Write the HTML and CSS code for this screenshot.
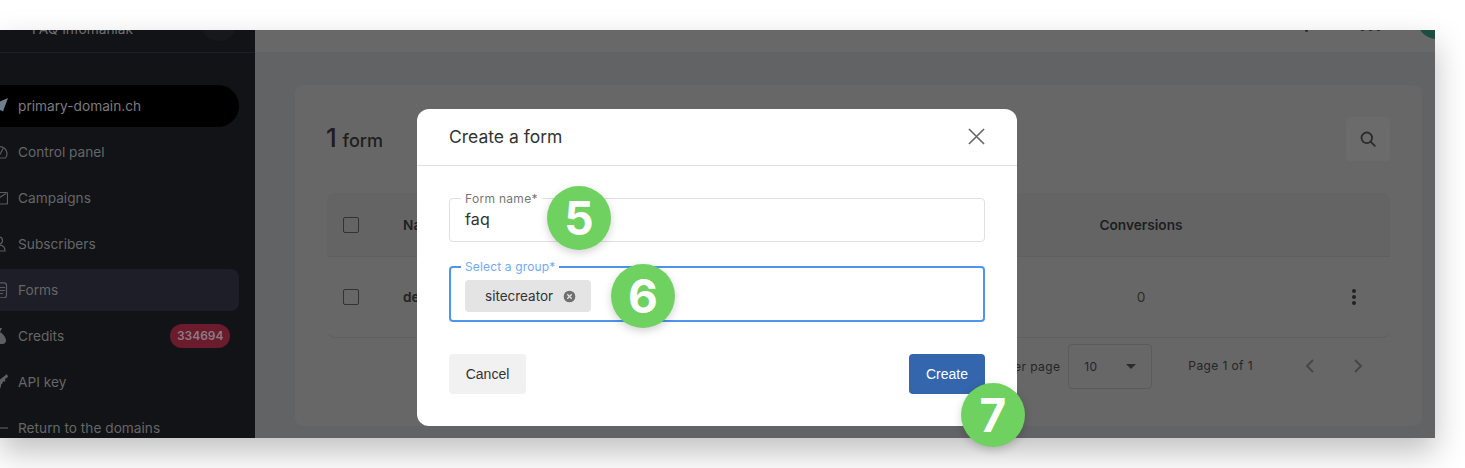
FILE: index.html
```html
<!DOCTYPE html>
<html lang="en">
<head>
  <meta charset="UTF-8" />
  <title>Create a form</title>
  <link rel="stylesheet" href="styles.css">
</head>
<body>
  <div class="shot">
    <aside class="sidebar">
      <div class="side-top">
        <span class="side-org">FAQ Infomaniak</span>
        <span class="side-avatar"></span>
      </div>
      <nav class="side-nav">
        <a class="nav-item nav-domain">
          <svg class="nav-icon" viewBox="0 0 16 16"><path class="solid-blue" d="M16 0 0 7l4 2.500L5.500 16l3-4 2.500 1.500z"/></svg>
          <span>primary-domain.ch</span>
        </a>
        <a class="nav-item">
          <svg class="nav-icon" viewBox="0 0 16 16"><path d="M2.500 14a7 7 0 1 1 11 0zM8 10.500 11 4.500"/></svg>
          <span>Control panel</span>
        </a>
        <a class="nav-item">
          <svg class="nav-icon" viewBox="0 0 16 16"><rect x="0" y="2.500" width="15.500" height="11.500" rx="1"/><path d="m2 11 5.500-3.500L14 3.500"/></svg>
          <span>Campaigns</span>
        </a>
        <a class="nav-item">
          <svg class="nav-icon" viewBox="0 0 16 16"><circle cx="7" cy="4.500" r="3.500"/><path d="M1 15c0-4 2-6 6-6s6 2 6 6z"/></svg>
          <span>Subscribers</span>
        </a>
        <a class="nav-item nav-active">
          <svg class="nav-icon" viewBox="0 0 16 16"><rect x="0" y="0.800" width="14.500" height="15" rx="2.500"/><path d="M5 5.500h8M5 8.500h8M5 11.500h6"/></svg>
          <span>Forms</span>
        </a>
        <a class="nav-item">
          <svg class="nav-icon" viewBox="0 0 16 16"><path class="solid" d="M3 0h7L8.500 3.500h-3zM5 4.500h4c3 2.500 5 5.500 5 8 0 2-1.500 3.500-3.500 3.500h-7C1.500 16 0 14.500 0 12.500c0-2.500 2-5.500 5-8z"/></svg>
          <span>Credits</span>
          <b class="nav-badge">334694</b>
        </a>
        <a class="nav-item">
          <svg class="nav-icon" viewBox="0 0 16 16"><path class="solid" d="M15 0 16 3 13 5 13.500 7.500 11 7.500 10 10 9 10.500C9.500 13 8 16 4.500 16 1.500 16 0 14 0 11.500 0 8.500 3 6.500 6 7z"/></svg>
          <span>API key</span>
        </a>
        <a class="nav-item">
          <svg class="nav-icon" viewBox="0 0 16 16"><path d="M0 8h16"/></svg>
          <span>Return to the domains</span>
        </a>
      </nav>
    </aside>

    <main class="main">
      <div class="topbar">
        <span class="top-help"></span>
        <span class="top-grid"><i></i><i></i><i></i></span>
        <span class="top-avatar"></span>
      </div>
      <div class="content">
        <section class="card">
          <header class="card-head">
            <h2 class="card-title"><strong>1</strong> form</h2>
            <button class="search-btn">
              <svg viewBox="0 0 16 16" width="16" height="16"><circle cx="6.800" cy="6.800" r="5.300"/><path d="m10.800 10.800 4 4"/></svg>
            </button>
          </header>
          <div class="table">
            <div class="tr th">
              <span class="checkbox"></span>
              <span>Name</span>
              <span class="num">Conversions</span>
              <span></span>
            </div>
            <div class="tr row">
              <span class="checkbox"></span>
              <span>default</span>
              <span class="num">0</span>
              <span class="kebab"><i></i><i></i><i></i></span>
            </div>
          </div>
          <footer class="pager">
            <span>Rows per page</span>
            <div class="per-page"><span>10</span><i class="caret"></i></div>
            <span class="page-of">Page 1 of 1</span>
            <div class="page-arrows">
              <svg viewBox="0 0 24 24" width="24" height="24"><path d="m15 6-6 6 6 6"/></svg>
              <svg viewBox="0 0 24 24" width="24" height="24"><path d="m9 6 6 6-6 6"/></svg>
            </div>
          </footer>
        </section>
      </div>
    </main>
  </div>

  <div class="modal">
    <div class="modal-head">
      <h3>Create a form</h3>
      <svg class="modal-close" viewBox="0 0 18 18" width="17" height="17"><path d="M1 1l16 16M17 1 1 17"/></svg>
    </div>
    <div class="modal-body">
      <div class="field">
        <label>Form name*</label>
        <span class="field-value">faq</span>
      </div>
      <div class="field field-focus">
        <label>Select a group*</label>
        <span class="chip">
          sitecreator
          <svg viewBox="0 0 13 13" width="13" height="13"><circle cx="6.500" cy="6.500" r="6.500"/><path d="m4.300 4.300 4.400 4.400m0-4.400-4.400 4.400"/></svg>
        </span>
      </div>
      <div class="modal-actions">
        <button class="btn btn-cancel">Cancel</button>
        <button class="btn btn-create">Create</button>
      </div>
    </div>
  </div>

  <span class="step step-5">5</span>
  <span class="step step-6">6</span>
  <span class="step step-7">7</span>
</body>
</html>
```

FILE: styles.css
```css
* {
  box-sizing: border-box;
}
html, body {
  margin: 0;
  height: 468px;
  overflow: hidden;
}
body {
  position: relative;
  background-color: #fff;
  font-family: Inter, "Liberation Sans", sans-serif;
  font-size: 13.7px;
}
.shot {
  display: flex;
  width: 1435px;
  height: 408px;
  margin-top: 30px;
  overflow: hidden;
  box-shadow: 0 14px 30px rgba(0,0,0,0.25);
}

/* sidebar */
.sidebar {
  flex: 0 0 255px;
  background-color: #121317;
  color: #666;
}
.side-top {
  display: flex;
  align-items: flex-end;
  justify-content: space-between;
  height: 23px;
  padding: 0 18px 13px 32px;
  border-bottom: 1px solid #1c1e29;
}
.side-org {
  line-height: 20px;
  color: #6e6e6e;
  flex: none;
}
.side-avatar {
  flex: none;
  width: 36px;
  height: 36px;
  margin-bottom: -2px;
  border-radius: 50%;
  background-color: #17181c;
}
.side-nav {
  display: flex;
  flex-direction: column;
  gap: 4px;
  width: 259px;
  margin: 32px 0 0 -20px;
}
.nav-item {
  display: flex;
  flex: none;
  align-items: center;
  gap: 10px;
  height: 42px;
  padding: 0 9px 1px 12px;
  border-radius: 8px;
}
.nav-domain {
  border-radius: 21px;
  background-color: #000;
  color: #7c7c7c;
}
.nav-active {
  background-color: #1d1e27;
}
.nav-icon {
  flex: none;
  width: 16px;
  height: 16px;
  fill: none;
  stroke: #5a5b5e;
  stroke-width: 1.200;
}
.nav-icon .solid {
  fill: #5e5f62;
  stroke: none;
}
.nav-icon .solid-blue {
  fill: #6f7f8e;
  stroke: none;
}
.nav-badge {
  margin-left: auto;
  padding: 0 6.500px;
  border-radius: 12px;
  background-color: #6a1c2c;
  color: #8e7a80;
  font-size: 12px;
  font-weight: 600;
  line-height: 24px;
}

/* main area */
.main {
  flex: 1;
  display: flex;
  flex-direction: column;
  min-width: 0;
  background-color: #626365;
}
.topbar {
  position: relative;
  flex: 0 0 22px;
  display: flex;
  align-items: flex-end;
  justify-content: flex-end;
  overflow: hidden;
  background-color: #686868;
}
.top-help {
  width: 3px;
  height: 3px;
  margin: 0 52px 20px 0;
  border-radius: 50%;
  background-color: #2c2c2c;
}
.top-grid {
  display: flex;
  gap: 3px;
  margin: 0 36px 21px 0;
}
.top-grid i {
  width: 5px;
  height: 5px;
  border-radius: 50%;
  background-color: #2c2c2c;
}
.top-avatar {
  flex: none;
  width: 40px;
  height: 40px;
  margin: 0 -22px 13px 0;
  border-radius: 50%;
  background-color: #1c4d40;
}
.content {
  flex: 1;
  padding: 33px 13px 12px 40px;
}
.card {
  height: 341px;
  padding: 32px 32px 0;
  border-radius: 8px;
  background-color: #676767;
}
.card-head {
  display: flex;
  align-items: center;
  justify-content: space-between;
  height: 44px;
  margin-bottom: 32px;
}
.card-title {
  margin: -4px 0 0 -1px;
  color: #1e1e1e;
  font-size: 18px;
  font-weight: 500;
}
.card-title strong {
  font-size: 26px;
  font-weight: 500;
  margin-right: 1px;
}
.search-btn {
  display: flex;
  align-items: center;
  justify-content: center;
  width: 44px;
  height: 44px;
  padding: 0;
  border: 0;
  border-radius: 4px;
  background-color: #6b6b6b;
}
.search-btn svg {
  fill: none;
  stroke: #2b2b2b;
  stroke-width: 1.800;
  stroke-linecap: round;
}
.table {
  border-bottom: 1px solid #5f5f5f;
  border-radius: 0 0 8px 8px;
  color: #222;
}
.tr {
  display: grid;
  grid-template-columns: 76px 638px 200px 1fr;
  align-items: center;
}
.th {
  height: 64px;
  border-radius: 8px 8px 0 0;
  border-bottom: 1px solid #5f5f5f;
  background-color: #646464;
  font-weight: 600;
  color: #1e1e1e;
}
.row {
  height: 80px;
  font-weight: 600;
}
.num {
  text-align: center;
}
.row .num {
  font-weight: 400;
  color: #2c2c2c;
}
.checkbox {
  width: 16px;
  height: 16px;
  margin-left: 16px;
  border: 1px solid #333;
  border-radius: 2px;
}
.kebab {
  display: flex;
  flex-direction: column;
  justify-self: end;
  gap: 2px;
  margin-right: 34px;
}
.kebab i {
  width: 4px;
  height: 4px;
  border-radius: 50%;
  background-color: #222;
}
.pager {
  display: flex;
  align-items: center;
  justify-content: flex-end;
  margin-top: 6px;
  color: #252525;
  font-size: 12px;
  letter-spacing: 0.4px;
}
.per-page {
  display: flex;
  align-items: center;
  justify-content: space-between;
  width: 84px;
  height: 45px;
  margin-left: 8px;
  padding: 0 15px;
  border: 1px solid #5b5b5b;
  border-radius: 4px;
}
.caret {
  width: 0;
  height: 0;
  border-left: 5px solid transparent;
  border-right: 5px solid transparent;
  border-top: 5px solid #2c2c2c;
}
.page-of {
  margin: -2px 45px 0 36px;
}
.page-arrows {
  display: flex;
  gap: 24px;
  margin: -2px 20px 0 0;
}
.page-arrows svg {
  fill: none;
  stroke: #454545;
  stroke-width: 1.800;
}

/* dialog */
.modal {
  position: absolute;
  left: 417px;
  top: 109px;
  width: 600px;
  height: 317px;
  border-radius: 12px;
  background-color: #fff;
  color: #333;
}
.modal-head {
  display: flex;
  align-items: center;
  justify-content: space-between;
  height: 57px;
  padding: 0 32px 2px;
  border-bottom: 1px solid #e0e0e0;
}
.modal-head h3 {
  margin: 0;
  font-size: 17.5px;
  font-weight: 400;
}
.modal-close {
  fill: none;
  stroke: #666;
  stroke-width: 1.700;
}
.modal-body {
  display: flex;
  flex-direction: column;
  gap: 24px;
  padding: 32px;
}
.field {
  position: relative;
  display: flex;
  align-items: center;
  height: 44px;
  padding: 0 15px;
  border: 1px solid #e0e0e0;
  border-radius: 4px;
}
.field label {
  position: absolute;
  left: 11px;
  top: -8px;
  padding: 0 4px;
  background-color: #fff;
  color: #777;
  font-size: 12px;
  line-height: 16px;
  letter-spacing: 0.3px;
}
.field-value {
  font-size: 16px;
  letter-spacing: 0.2px;
  padding-bottom: 2px;
}
.field-focus {
  height: 56px;
  padding: 4px 14px 0;
  border: 2px solid #4f94ef;
}
.field-focus label {
  left: 10px;
  top: -9px;
  color: #74a9f3;
  letter-spacing: 0.15px;
}
.chip {
  display: flex;
  align-items: center;
  gap: 10px;
  height: 32px;
  padding: 0 15px 0 20px;
  border-radius: 4px;
  background-color: #e4e4e4;
  color: #333;
  font-size: 13.5px;
}
.chip svg {
  stroke: #e4e4e4;
  stroke-width: 1.300;
  fill: #707070;
}
.modal-actions {
  display: flex;
  justify-content: space-between;
  margin-top: 8px;
}
.btn {
  height: 40px;
  border: 0;
  border-radius: 4px;
  font-family: "Liberation Sans", Arial, sans-serif;
  font-size: 14px;
}
.btn-cancel {
  width: 77px;
  background-color: #f1f1f1;
  color: #333;
}
.btn-create {
  width: 76px;
  background-color: #3366ad;
  color: #fff;
}

/* green step markers */
.step {
  position: absolute;
  display: flex;
  align-items: center;
  justify-content: center;
  width: 64px;
  height: 64px;
  border-radius: 50%;
  background-color: #6fd160;
  box-shadow: 0 3px 8px rgba(0,0,0,0.18);
  color: #fff;
  font-size: 46px;
  font-weight: 700;
}
.step-5 { left: 547px; top: 186px; }
.step-6 { left: 611px; top: 264px; }
.step-7 { left: 961px; top: 383px; }
```
